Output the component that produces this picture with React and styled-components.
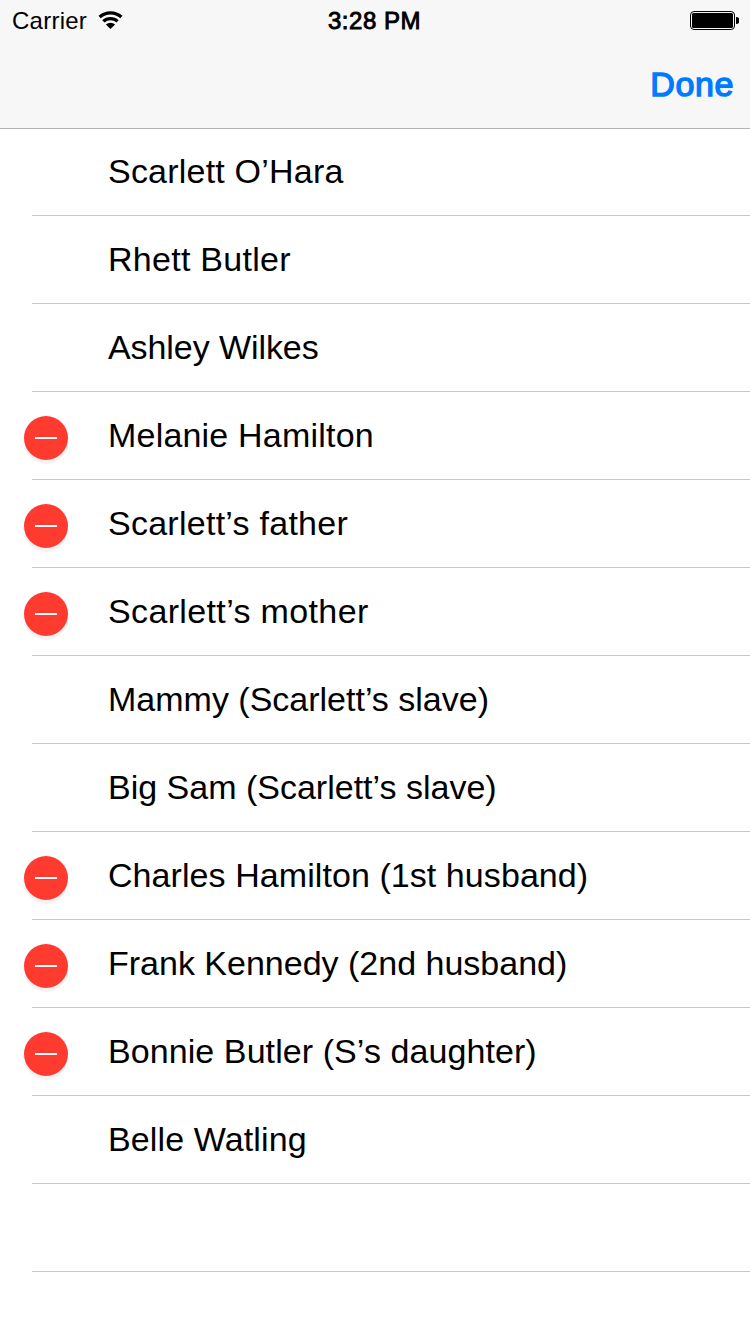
import React from 'react';
import styled, { createGlobalStyle } from 'styled-components';

const GlobalStyle = createGlobalStyle`
  body {
    margin: 0;
    background: #ffffff;
    font-family: "Liberation Sans", Arial, sans-serif;
    color: #000000;
  }
`;

const Screen = styled.div`
  width: 750px;
  height: 1334px;
  overflow: hidden;
`;

const Header = styled.header`
  box-sizing: border-box;
  height: 129px;
  background: #f7f7f7;
  border-bottom: 1px solid #b2b2b2;
`;

const StatusBar = styled.div`
  box-sizing: border-box;
  height: 40px;
  padding: 0 11px 0 12px;
  display: grid;
  grid-template-columns: 1fr auto 1fr;
  align-items: center;
  font-size: 24px;
`;

const Carrier = styled.div`
  display: flex;
  align-items: center;
  gap: 11px;
`;

const Label = styled.span`
  display: inline-block;
  white-space: nowrap;
  line-height: 42px;
  letter-spacing: 0.25px;
`;

/* medium weight, between the regular and bold cuts */
const Time = styled(Label)`
  letter-spacing: 0.55px;
  margin-right: 2px;
  -webkit-text-stroke: 0.9px #000000;
`;

const Wifi = styled.svg`
  margin-bottom: 2px;
`;

const Battery = styled.svg`
  justify-self: end;
  margin-bottom: 2px;
`;

const NavBar = styled.nav`
  height: 88px;
  display: flex;
  justify-content: flex-end;
  padding-right: 16px;
`;

const DoneButton = styled.button`
  border: 0;
  padding: 0;
  height: 88px;
  background: none;
  color: #007aff;
  font: 400 34px/88px "Liberation Sans", Arial, sans-serif;
  letter-spacing: 0.6px;
  -webkit-text-stroke: 1.4px #007aff;
`;

const List = styled.ul`
  margin: 0;
  padding: 0;
  list-style: none;
`;

const Row = styled.li`
  height: 88px;
  margin-top: ${({ $first }) => ($first ? '-1px' : '0')};
  display: grid;
  grid-template-columns: 24px 84px 1fr;
  align-items: center;
  background: linear-gradient(#c8c8c8, #c8c8c8) 32px 100% / 718px 1px no-repeat;
`;

const Name = styled.span`
  grid-column: 3;
  grid-row: 1;
  font-size: 34px;
  line-height: 86px;
  margin-bottom: 2px;
  letter-spacing: ${({ $spacing }) => $spacing}px;
  white-space: nowrap;
`;

const RemoveButton = styled.button`
  grid-column: 2;
  grid-row: 1;
  width: 44px;
  height: 44px;
  margin-top: 3px;
  padding: 0;
  border: 0;
  border-radius: 50%;
  background: #ff3b30;
  box-shadow: 0 4px 1px rgba(0, 0, 0, 0.05);
  display: flex;
  align-items: center;
  justify-content: center;
`;

const Minus = styled.span`
  width: 22px;
  height: 2px;
  background: #ffffff;
`;

const people = [
  { name: 'Scarlett O’Hara', spacing: 0.21 },
  { name: 'Rhett Butler', spacing: 0.27 },
  { name: 'Ashley Wilkes', spacing: -0.08 },
  { name: 'Melanie Hamilton', spacing: 0.2, removable: true },
  { name: 'Scarlett’s father', spacing: 0.26, removable: true },
  { name: 'Scarlett’s mother', spacing: 0.36, removable: true },
  { name: 'Mammy (Scarlett’s slave)', spacing: 0 },
  { name: 'Big Sam (Scarlett’s slave)', spacing: 0 },
  { name: 'Charles Hamilton (1st husband)', spacing: 0.07, removable: true },
  { name: 'Frank Kennedy (2nd husband)', spacing: 0, removable: true },
  { name: 'Bonnie Butler (S’s daughter)', spacing: 0.08, removable: true },
  { name: 'Belle Watling', spacing: 0.12 },
  { name: '', spacing: 0 },
];

const App = () => {
  return (
    <>
      <GlobalStyle />
      <Screen>
        <Header>
          <StatusBar>
            <Carrier>
              <Label>Carrier</Label>
              <Wifi width="25" height="18" viewBox="0 0 25 18" fill="none" stroke="#000" strokeWidth="3.2">
                <path d="M1.6 6a16.2 16.2 0 0 1 21.8 0" />
                <path d="M5.4 10.4a10.3 10.3 0 0 1 14.2 0" />
                <path d="M12.5 18l-4.6-4.4a6.4 6.4 0 0 1 9.2 0z" fill="#000" stroke="none" />
              </Wifi>
            </Carrier>
            <Time>3:28 PM</Time>
            <Battery width="49" height="19" viewBox="0 0 49 19">
              <rect x="0.5" y="0.5" width="44" height="18" rx="3.5" fill="none" stroke="#000" />
              <rect x="2" y="2" width="41" height="15" rx="1.5" />
              <path d="M46 6a3.2 3.2 0 0 1 0 7z" />
            </Battery>
          </StatusBar>
          <NavBar>
            <DoneButton>Done</DoneButton>
          </NavBar>
        </Header>
        <List>
          {people.map((person, index) => (
            <Row key={index} $first={index === 0}>
              {person.removable && (
                <RemoveButton aria-label="Remove">
                  <Minus />
                </RemoveButton>
              )}
              <Name $spacing={person.spacing}>{person.name}</Name>
            </Row>
          ))}
        </List>
      </Screen>
    </>
  );
};

export default App;
